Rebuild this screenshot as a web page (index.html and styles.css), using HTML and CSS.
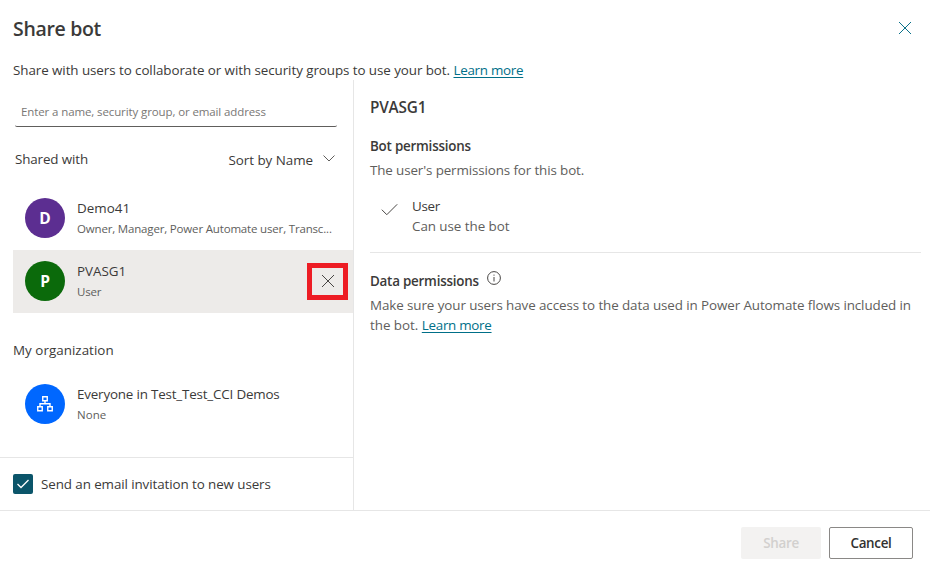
FILE: index.html
```html
<!DOCTYPE html>
<html lang="en">
<head>
<meta charset="utf-8">
<title>Share bot</title>
<link rel="stylesheet" href="styles.css">
</head>
<body>
<div class="dialog">
  <header class="header">
    <div class="title-bar">
      <h1 class="title"><span class="fit-title">Share bot</span></h1>
      <svg class="close" width="14" height="14" viewBox="0 0 14 14"><path d="M1 1L13 13M13 1L1 13"/></svg>
    </div>
    <p class="intro"><span class="fit-intro">Share with users to collaborate or with security groups to use your bot.</span> <a class="link">Learn more</a></p>
  </header>
  <main class="body">
    <section class="people">
      <div class="search"><span class="fit-search">Enter a name, security group, or email address</span></div>
      <div class="list-head">
        <span class="fit-shared">Shared with</span>
        <span class="sort"><span class="fit-sort">Sort by Name</span><svg width="12" height="7" viewBox="0 0 12 7"><path d="M.5 .5L6 6L11.5 .5"/></svg></span>
      </div>
      <div class="row">
        <div class="avatar purple">D</div>
        <div class="who"><div class="name"><span class="fit-demo">Demo41</span></div><div class="role"><span class="fit-owner">Owner, Manager, Power Automate user, Transc...</span></div></div>
      </div>
      <div class="row selected">
        <div class="avatar green">P</div>
        <div class="who"><div class="name"><span class="fit-group">PVASG1</span></div><div class="role"><span class="fit-role">User</span></div></div>
        <div class="remove"><svg width="14" height="14" viewBox="0 0 14 14"><path d="M1 1L13 13M13 1L1 13"/></svg></div>
      </div>
      <h2 class="org-head"><span class="fit-org">My organization</span></h2>
      <div class="row">
        <div class="avatar blue"><svg width="18" height="18" viewBox="0 0 18 18"><path d="M6.75 1.75h4.5v4h-4.5zM1.75 11.75h4.5v4h-4.5zM11.75 11.75h4.5v4h-4.5zM9 6v2.75M4 11.5V8.75h10v2.75"/></svg></div>
        <div class="who"><div class="name"><span class="fit-everyone">Everyone in Test_Test_CCI Demos</span></div><div class="role"><span class="fit-none">None</span></div></div>
      </div>
      <div class="invite">
        <span class="checkbox"><svg width="14" height="10" viewBox="0 0 14 10"><path d="M1.5 5L5 8.5L12.5 1"/></svg></span>
        <span class="fit-invite">Send an email invitation to new users</span>
      </div>
    </section>
    <section class="details">
      <h2 class="subject"><span class="fit-subject">PVASG1</span></h2>
      <h3 class="section-title"><span class="fit-bot">Bot permissions</span></h3>
      <p class="text"><span class="fit-desc">The user's permissions for this bot.</span></p>
      <div class="permission">
        <svg width="17" height="13" viewBox="0 0 17 13"><path d="M.8 6.7L5.8 11.7L16.2 1.3"/></svg>
        <div><div class="perm-name"><span class="fit-user">User</span></div><div class="text"><span class="fit-can">Can use the bot</span></div></div>
      </div>
      <h3 class="section-title data"><span class="fit-data">Data permissions</span><svg width="14" height="14" viewBox="0 0 14 14"><circle cx="7" cy="7" r="6.4"/><path d="M7 6v4.5M7 3.6v1.1"/></svg></h3>
      <p class="text"><span class="fit-make">Make sure your users have access to the data used in Power Automate flows included in</span><br><span class="fit-the">the bot.</span> <a class="link">Learn more</a></p>
    </section>
  </main>
  <footer class="footer">
    <button class="button disabled" disabled>Share</button>
    <button class="button cancel">Cancel</button>
  </footer>
</div>
</body>
</html>
```
FILE: styles.css
```css
* { box-sizing: border-box; }
body, h1, h2, h3, p { margin: 0; }
body {
  background: #fff;
  color: #3b3a39;
  font: 13.4px/20px "Open Sans", "Noto Sans", sans-serif;
  white-space: nowrap;
}
svg { display: block; flex: none; fill: none; stroke: #484644; }
.dialog { width: 930px; height: 576px; display: flex; flex-direction: column; overflow: hidden; }
.header { height: 80px; flex: none; padding: 15px 13px 0; }
.title-bar { display: flex; justify-content: space-between; height: 28px; }
.title { font-size: 19.5px; line-height: 28px; font-weight: 600; }
.close { margin: 6px 5px 0 0; stroke: #0b7189; }
.intro { margin-top: 17px; }
.link { color: #006f88; text-decoration: underline; text-underline-offset: 2px; letter-spacing: -.28px; }
.body { height: 430px; flex: none; display: flex; }
.people { width: 354px; flex: none; border-right: 1px solid #e6e6e6; display: flex; flex-direction: column; }
.search { margin: 17px 16px 0 15px; height: 30px; padding: 0 6px; border-bottom: 1px solid #605e5c; border-radius: 2px; color: #797775; font-size: 11.5px; line-height: 30px; }
.list-head { display: flex; justify-content: space-between; padding: 22px 18px 0 15px; height: 60px; }
.sort { display: flex; gap: 10px; padding-top: 1px; }
.sort svg { margin-top: 5px; stroke: #605e5c; }
.row { height: 63px; flex: none; margin-left: 13px; padding: 11px 5px 0 12px; display: flex; gap: 12px; }
.selected { background: #edebe9; }
.avatar { width: 40px; height: 40px; flex: none; border-radius: 50%; display: flex; align-items: center; justify-content: center; color: #fff; font-size: 15.5px; font-weight: 700; }
.avatar svg { stroke: #fff; stroke-width: 1.4; }
.purple { background: #5c2e91; }
.green { background: #0b6a0b; }
.blue { background: #0067ff; }
.who { flex: 1; min-width: 0; }
.name { height: 20px; }
.role { color: #605e5c; font-size: 11.5px; line-height: 22px; }
.remove { width: 41px; height: 37px; flex: none; margin-top: 2px; border: 5px solid #ed1c24; display: flex; align-items: center; justify-content: center; }
.remove svg { margin-top: -1px; }
.org-head { font-size: 13.4px; font-weight: 400; height: 60px; padding: 27px 0 0 13px; }
.invite { margin-top: auto; height: 53px; border-top: 1px solid #e6e6e6; padding: 0 0 0 13px; display: flex; align-items: center; gap: 8px; }
.checkbox { width: 20px; height: 20px; border-radius: 2px; background: #0b556a; display: flex; align-items: center; justify-content: center; }
.checkbox svg { stroke: #fff; stroke-width: 1.3; }
.details { flex: 1; min-width: 0; padding: 16px 9px 0 16px; }
.subject { font-size: 15.3px; line-height: 22px; font-weight: 600; }
.section-title { font-size: 13.4px; line-height: 20px; font-weight: 600; margin: 18px 0 4px; }
.text { color: #605e5c; }
.permission { display: flex; gap: 14px; height: 73px; padding: 16px 0 0 12px; border-bottom: 1px solid #e6e6e6; }
.permission svg { margin-top: 7px; margin-left: -1px; }
.data { display: flex; gap: 8px; }
.footer { height: 66px; flex: none; border-top: 1px solid #e6e6e6; padding: 16px 17px 0; display: flex; justify-content: flex-end; gap: 8px; }
.button { height: 32px; padding: 0; border-radius: 2px; font: 600 13.4px/20px "Open Sans", "Noto Sans", sans-serif; letter-spacing: -.3px; }
.disabled { width: 80px; border: 0; background: #f3f2f1; color: #d2d0ce; }
.cancel { width: 84px; border: 1px solid #8a8886; background: #fff; color: #323130; }

/* Tracking per label */
.fit-title { letter-spacing: -.32px; }
.fit-intro { letter-spacing: -.07px; }
.fit-search { letter-spacing: -.11px; }
.fit-shared { letter-spacing: -.13px; }
.fit-sort { letter-spacing: -.03px; }
.fit-demo { letter-spacing: .03px; }
.fit-owner { letter-spacing: -.17px; }
.fit-group { letter-spacing: 0; }
.fit-role { letter-spacing: -.2px; }
.fit-org { letter-spacing: .03px; }
.fit-everyone { letter-spacing: -.18px; }
.fit-none { letter-spacing: .05px; }
.fit-invite { letter-spacing: -.09px; }
.fit-subject { letter-spacing: -.17px; }
.fit-bot { letter-spacing: -.22px; }
.fit-desc { letter-spacing: -.12px; }
.fit-user { letter-spacing: -.27px; }
.fit-can { letter-spacing: -.05px; }
.fit-data { letter-spacing: -.23px; }
.fit-make { letter-spacing: -.09px; }
.fit-the { letter-spacing: -.03px; }
```
